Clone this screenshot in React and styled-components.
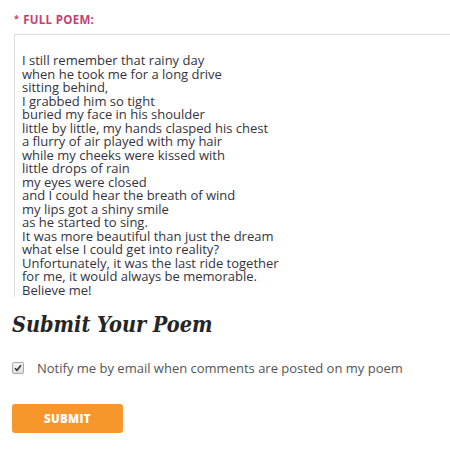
import React, { useState } from 'react'
import styled, { createGlobalStyle } from 'styled-components'

const GlobalStyle = createGlobalStyle`
    html, body {
        margin: 0;
        padding: 0;
        background: #fff;
        overflow: hidden;
    }
    body {
        font-family: "Open Sans", "Noto Sans", sans-serif;
    }
`;

const Page = styled.div`
    width: 450px;
    height: 461px;
    padding: 12px 0 0 12px;
    box-sizing: border-box;
    overflow: hidden;
`;

const Label = styled.label`
    display: block;
    margin-left: 2px;
    font-size: 11.5px;
    font-weight: 700;
    letter-spacing: 0.3px;
    color: #c4416f;
    line-height: 14px;

    & span {
        font-size: 9px;
        vertical-align: 2px;
        margin-right: 4px;
    }
`;

const PoemBox = styled.div`
    margin: 7px 0 0 2px;
    width: 480px;
    height: 263px;
    border: 1px solid #dcdcdc;
    border-bottom: none;
    border-right: none;
    box-sizing: border-box;
    padding: 19px 0 0 7px;
    overflow: hidden;
    font-size: 13px;
    line-height: 13.5px;
    color: #353340;
    white-space: pre-line;
`;

const Heading = styled.h2`
    margin: 13px 0 0 0;
    font-family: "DejaVu Serif Condensed", "DejaVu Serif", serif;
    font-stretch: condensed;
    font-style: italic;
    font-weight: 700;
    font-size: 21.5px;
    line-height: 30px;
    color: #252525;
`;

const CheckRow = styled.label`
    display: flex;
    align-items: center;
    gap: 13px;
    margin-top: 19px;
    font-size: 13px;
    color: #555;
`;

const Box = styled.span`
    width: 10px;
    height: 10px;
    border: 1px solid #a8a8a8;
    border-radius: 2px;
    background: linear-gradient(#f4f4f4, #dedede);
    display: flex;
    align-items: center;
    justify-content: center;
`;

const SubmitButton = styled.button`
    margin-top: 27px;
    width: 111px;
    height: 29px;
    border: none;
    border-radius: 3px;
    background: #f7972b;
    color: #fff;
    font-family: "Open Sans", "Noto Sans", sans-serif;
    font-weight: 800;
    font-size: 11.5px;
    letter-spacing: 0.3px;
    cursor: pointer;
`;

const poem = `I still remember that rainy day
when he took me for a long drive
sitting behind,
I grabbed him so tight
buried my face in his shoulder
little by little, my hands clasped his chest
a flurry of air played with my hair
while my cheeks were kissed with
little drops of rain
my eyes were closed
and I could hear the breath of wind
my lips got a shiny smile
as he started to sing.
It was more beautiful than just the dream
what else I could get into reality?
Unfortunately, it was the last ride together
for me, it would always be memorable.
Believe me!`

const App = () => {
    const [notify, setNotify] = useState(true)

    return (
        <>
            <GlobalStyle />
            <Page>
                <Label><span>*</span>FULL POEM:</Label>
                <PoemBox>{poem}</PoemBox>

                <Heading>Submit Your Poem</Heading>

                <CheckRow onClick={() => setNotify(!notify)}>
                    <Box>
                        {notify && (
                            <svg width="8" height="8" viewBox="0 0 8 8">
                                <path d="M1 4.2 L3 6.3 L7 1.3" fill="none" stroke="#333" strokeWidth="1.6" />
                            </svg>
                        )}
                    </Box>
                    Notify me by email when comments are posted on my poem
                </CheckRow>

                <SubmitButton>SUBMIT</SubmitButton>
            </Page>
        </>
    )
}

export default App
